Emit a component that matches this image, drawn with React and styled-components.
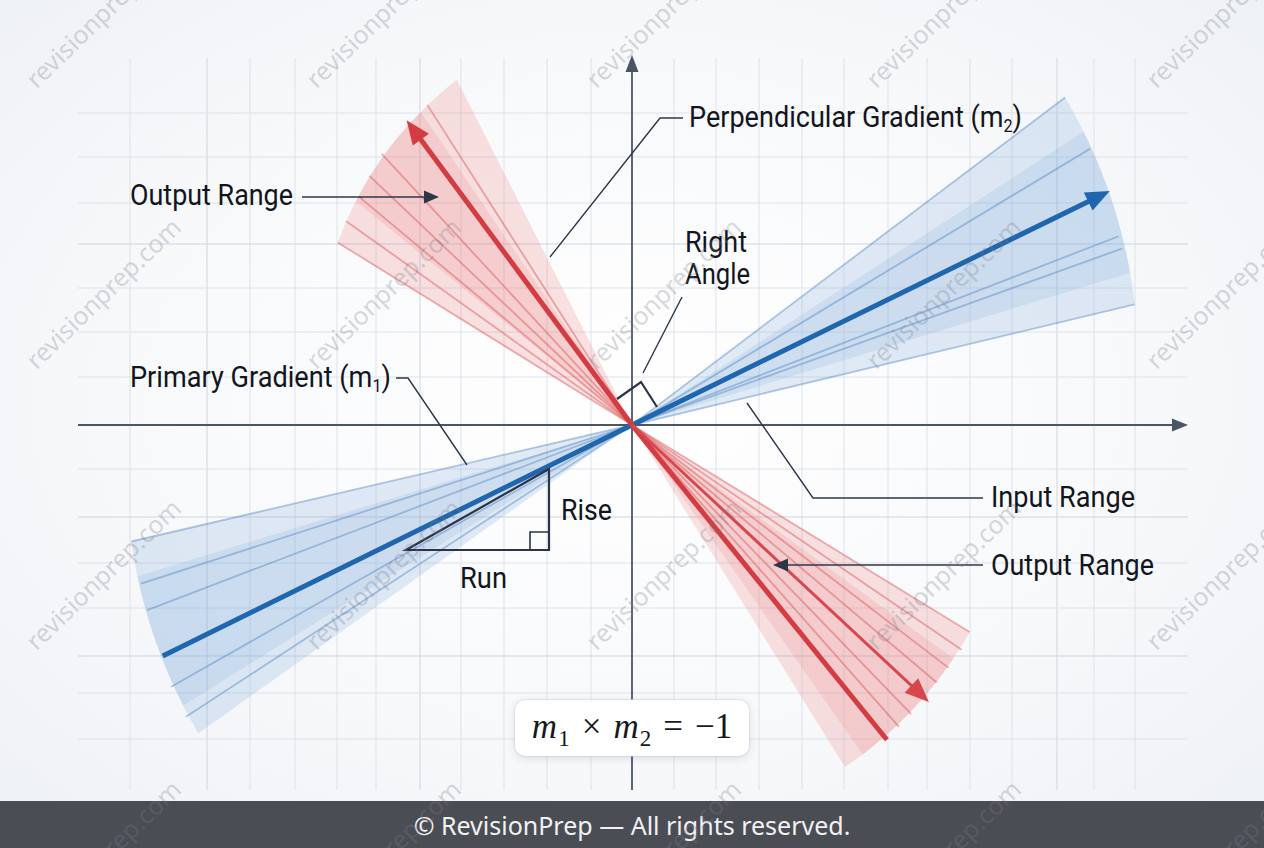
import React from "react";
import styled, { createGlobalStyle } from "styled-components";

const GlobalStyle = createGlobalStyle`
  html, body {
    margin: 0;
    padding: 0;
    background: #f3f5f8;
  }
`;

const Page = styled.div`
  position: relative;
  width: 1264px;
  height: 848px;
  display: flex;
  flex-direction: column;
  overflow: hidden;
  font-family: "Noto Sans", "Open Sans", sans-serif;
`;

const Figure = styled.section`
  position: relative;
  flex: 1;
  background: radial-gradient(ellipse 70% 75% at 50% 50%, #ffffff 0%, #f8f9fb 55%, #eef1f5 100%);
`;

const Diagram = styled.svg`
  display: block;
`;

const Label = styled.text`
  font-family: "Roboto", "Liberation Sans", sans-serif;
  font-size: 30px;
  fill: #12151c;
`;

const FormulaCard = styled.div`
  position: absolute;
  left: 515px;
  top: 700px;
  width: 234px;
  height: 56px;
  box-sizing: border-box;
  display: flex;
  align-items: center;
  justify-content: center;
  gap: 12px;
  padding-bottom: 2px;
  background: #ffffff;
  border-radius: 10px;
  box-shadow: 0 2px 8px rgba(40, 50, 70, 0.14), 0 0 0 1px rgba(220, 225, 232, 0.6);
  font-family: "Liberation Serif", "DejaVu Serif", serif;
  font-size: 35px;
  color: #16181d;
`;

const Term = styled.span`
  display: inline-flex;
  align-items: baseline;
  font-style: ${(p) => (p.$italic ? "italic" : "normal")};
`;

const Sub = styled.span`
  font-style: normal;
  font-size: 23px;
  position: relative;
  top: 8px;
  margin-left: 1px;
`;

const Footer = styled.footer`
  height: 47px;
  display: flex;
  align-items: center;
  justify-content: center;
  background: #4b4d55;
  color: #f1f2f4;
  font-size: 25px;
  letter-spacing: 0;
`;

const Watermarks = styled.svg`
  position: absolute;
  left: 0;
  top: 0;
  pointer-events: none;
`;

const Mark = styled.text`
  font-family: "Noto Sans", "Open Sans", sans-serif;
  font-size: 25px;
  fill: rgba(118, 124, 136, 0.3);
`;

const O = [632, 425];
const rad = (a) => (a * Math.PI) / 180;
const pt = (a, r) => [O[0] + r * Math.cos(rad(a)), O[1] + r * Math.sin(rad(a))];
const fmt = (p) => `${p[0].toFixed(1)},${p[1].toFixed(1)}`;

function wedge(a0, r0, a1, r1, n = 28) {
  const pts = [];
  for (let i = 0; i <= n; i++) {
    const t = i / n;
    pts.push(pt(a0 + (a1 - a0) * t, r0 + (r1 - r0) * t));
  }
  return `M${fmt(O)} L${pts.map(fmt).join(" L")} Z`;
}

// radius at angle a, between the two edges of a fan
const edgeR = (fan, a) => {
  const [[a0, r0], [a1, r1]] = fan.edges;
  const t = (a - a0) / (a1 - a0);
  return r0 + (r1 - r0) * t;
};

function arrowHead(tip, a, len, half) {
  const d = [Math.cos(rad(a)), Math.sin(rad(a))];
  const n = [-d[1], d[0]];
  const b = [tip[0] - d[0] * len, tip[1] - d[1] * len];
  return `${fmt(tip)} ${fmt([b[0] + n[0] * half, b[1] + n[1] * half])} ${fmt([b[0] - n[0] * half, b[1] - n[1] * half])}`;
}

const fans = [
  {
    id: "redUp",
    color: "236,110,110",
    line: "214,72,76",
    edges: [[-116.9, 387], [-148.2, 346]],
    rays: [[-122.6, 380], [-132.7, 369], [-136.5, 362], [-140.1, 356], [-144.5, 351], [-148.2, 346]],
    core: [-124, -141],
  },
  {
    id: "redDown",
    color: "236,110,110",
    line: "214,72,76",
    edges: [[31.5, 396], [58.1, 403]],
    rays: [[31.5, 396], [34.3, 399], [37.5, 399], [40.2, 399], [46, 402], [48.5, 403]],
    core: [36, 55],
  },
  {
    id: "blueUp",
    color: "110,160,214",
    line: "74,128,190",
    edges: [[-37.1, 543], [-13.5, 517]],
    rays: [[-37.1, 543], [-31.1, 535], [-21.2, 522], [-19.8, 521], [-13.5, 517]],
    core: [-33, -17],
  },
  {
    id: "blueDown",
    color: "110,160,214",
    line: "74,128,190",
    edges: [[166.9, 514], [144.6, 532]],
    rays: [[166.9, 514], [162.1, 516], [159.1, 519], [150.4, 530], [146.8, 533]],
    core: [163, 148],
  },
];

const gridX = [130, 207, 250, 295, 337, 376, 420, 461, 504, 547, 591, 674, 716, 759, 802, 844, 888, 927, 970, 1012, 1057, 1094, 1135];
const gridY = [113, 157, 203, 244, 288, 332, 377, 469, 517, 563, 608, 656, 693, 739];
const strongX = [207, 420, 1057];
const strongY = [244, 517, 656];

const leaders = [
  "M302,197 L428,197",
  "M683,118 L660,118 L550,257",
  "M682,297 L643,373",
  "M396,378 L408,378 L467,465",
  "M983,498 L813,498 L747,403",
  "M983,565 L786,565",
];

const labels = [
  { x: 130, y: 205, w: 163, text: "Output Range" },
  { x: 685, y: 252, w: 62, text: "Right" },
  { x: 685, y: 284, w: 65, text: "Angle" },
  { x: 991, y: 507, w: 144, text: "Input Range" },
  { x: 991, y: 575, w: 163, text: "Output Range" },
  { x: 561, y: 520, w: 51, text: "Rise" },
  { x: 460, y: 588, w: 47, text: "Run" },
];

function Fan({ fan }) {
  const [[a0, r0], [a1, r1]] = fan.edges;
  const [c0, c1] = fan.core;
  return (
    <g>
      <path d={wedge(a0, r0, a1, r1)} fill={`rgba(${fan.color},0.2)`} />
      <path d={wedge(c0, edgeR(fan, c0), c1, edgeR(fan, c1))} fill={`rgba(${fan.color},0.16)`} />
      {fan.rays.map(([a, r], i) => {
        const p = pt(a, r);
        return (
          <line
            key={i}
            x1={O[0]}
            y1={O[1]}
            x2={p[0]}
            y2={p[1]}
            stroke={`rgba(${fan.line},0.42)`}
            strokeWidth="1.8"
          />
        );
      })}
    </g>
  );
}

function MainLine({ a, r, color, width, head }) {
  const tip = pt(a, r);
  const end = head ? pt(a, r - head[0] + 2) : tip;
  return (
    <g>
      <line x1={O[0]} y1={O[1]} x2={end[0]} y2={end[1]} stroke={color} strokeWidth={width} />
      {head && <polygon points={arrowHead(tip, a, head[0], head[1])} fill={color} />}
    </g>
  );
}

export default function App() {
  const marks = [];
  for (let j = 0; j < 4; j++) {
    for (let i = 0; i < 5; i++) {
      marks.push([105 + 280 * i, 14 + 281 * j]);
    }
  }

  return (
    <>
      <GlobalStyle />
      <Page>
        <Figure>
          <Diagram width="1264" height="801" viewBox="0 0 1264 801">
            {/* grid */}
            <g strokeWidth="1">
              {gridX.map((x) => (
                <line key={`gx${x}`} x1={x} y1={58} x2={x} y2={790} stroke={strongX.includes(x) ? "#cfd5df" : "#dde2ea"} />
              ))}
              {gridY.map((y) => (
                <line key={`gy${y}`} x1={78} y1={y} x2={1188} y2={y} stroke={strongY.includes(y) ? "#cfd5df" : "#dde2ea"} />
              ))}
            </g>

            {/* axes */}
            <g stroke="#4a5566" strokeWidth="1.8">
              <line x1={78} y1={425} x2={1176} y2={425} />
              <line x1={632} y1={790} x2={632} y2={68} />
            </g>
            <polygon points="1188,425 1172,418.5 1172,431.5" fill="#4a5566" />
            <polygon points="632,55 625.5,72 638.5,72" fill="#4a5566" />

            {/* fans */}
            {fans.map((f) => (
              <Fan key={f.id} fan={f} />
            ))}

            {/* main gradient lines */}
            <MainLine a={153.8} r={523} color="#1f66ae" width={5} />
            <MainLine a={-26.1} r={532} color="#1f66ae" width={5} head={[24, 10]} />
            <MainLine a={51} r={405} color="#d33c42" width={5} />
            <MainLine a={43} r={406} color="#d8474c" width={3} head={[24, 10]} />
            <MainLine a={-126.5} r={379} color="#d33c42" width={5} head={[24, 10]} />

            {/* right angle + rise/run */}
            <g fill="none" stroke="#2b3444" strokeWidth="2.2" strokeLinejoin="miter">
              <path d="M617,399 L641,382 L657,407" />
              <path d="M406,550 L549,469 L549,550 Z" />
              <path d="M530,550 L530,532 L549,532" strokeWidth="1.6" />
            </g>

            {/* leaders */}
            <g fill="none" stroke="#2d3748" strokeWidth="1.4">
              {leaders.map((d) => (
                <path key={d} d={d} />
              ))}
            </g>
            <polygon points="439,197 424,190.5 424,203.5" fill="#2d3748" />
            <polygon points="773,565 788,558.5 788,571.5" fill="#2d3748" />

            {/* labels */}
            {labels.map((l) => (
              <Label key={l.text + l.y} x={l.x} y={l.y} textLength={l.w} lengthAdjust="spacingAndGlyphs">
                {l.text}
              </Label>
            ))}
            <Label x={689} y={127} textLength={333} lengthAdjust="spacingAndGlyphs">
              Perpendicular Gradient (m
              <tspan fontSize="18" dy="5">2</tspan>
              <tspan dy="-5">)</tspan>
            </Label>
            <Label x={130} y={387} textLength={261} lengthAdjust="spacingAndGlyphs">
              Primary Gradient (m
              <tspan fontSize="18" dy="5">1</tspan>
              <tspan dy="-5">)</tspan>
            </Label>
          </Diagram>

          <FormulaCard>
            <Term $italic>
              m<Sub>1</Sub>
            </Term>
            <Term>×</Term>
            <Term $italic>
              m<Sub>2</Sub>
            </Term>
            <Term>=</Term>
            <Term>−1</Term>
          </FormulaCard>
        </Figure>

        <Footer>© RevisionPrep — All rights reserved.</Footer>

        <Watermarks width="1264" height="848" viewBox="0 0 1264 848">
          {marks.map(([x, y]) => (
            <Mark key={`${x}-${y}`} x={x} y={y} textAnchor="middle" dominantBaseline="middle" transform={`rotate(-44 ${x} ${y})`}>
              revisionprep.com
            </Mark>
          ))}
        </Watermarks>
      </Page>
    </>
  );
}
